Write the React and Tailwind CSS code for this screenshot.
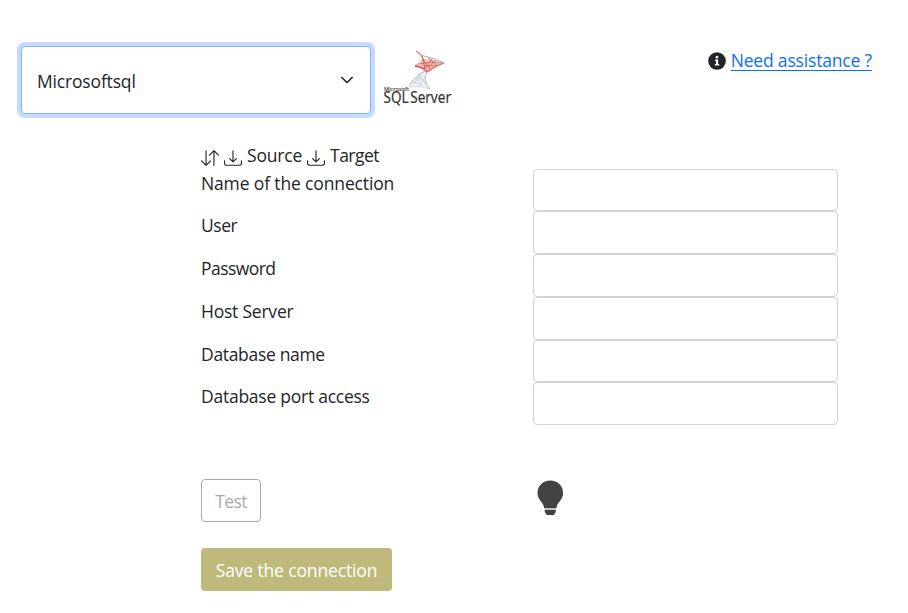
import React from "react";
import { BsArrowDownUp, BsDownload, BsChevronDown } from "react-icons/bs";

const fields = [
  { label: "Name of the connection", type: "text", height: "h-[42px]", tracking: "tracking-[-0.14px]" },
  { label: "User", type: "text", height: "h-[43px]", tracking: "tracking-[-0.45px]" },
  { label: "Password", type: "password", height: "h-[43px]", tracking: "tracking-[-0.55px]" },
  { label: "Host Server", type: "text", height: "h-[43px]", tracking: "tracking-[-0.22px]" },
  { label: "Database name", type: "text", height: "h-[42px]", tracking: "tracking-[-0.32px]" },
  { label: "Database port access", type: "text", height: "h-[43px]", tracking: "tracking-[-0.25px]" },
];

function SqlServerLogo() {
  return (
    <svg width="70" height="60" viewBox="0 0 70 60" className="shrink-0 overflow-visible" aria-label="Microsoft SQL Server">
      <defs>
        <linearGradient id="wing" x1="0" x2="1" y1="0" y2="0">
          <stop offset="0" stopColor="#dd4444" />
          <stop offset="0.6" stopColor="#df6a62" />
          <stop offset="1" stopColor="#b99a9a" />
        </linearGradient>
      </defs>
      <path d="M43 21Q33 25 26 37Q37 35 47 39Q39 32 43 21Z" fill="#eef1f4" />
      <path d="M42 21Q33 25 26 36M44 22Q39 31 47 39" fill="none" stroke="#a3afbd" strokeWidth="0.9" />
      <path d="M26 37Q37 35 47 39M30 32L38 35L34 27L41 30L35 36M36 25L42 33M38 24L31 34" fill="none" stroke="#c3cad2" strokeWidth="0.7" />
      <path d="M40 9Q39 13 32 16Q40 17 44 22Q50 17 61 13Q53 9 40 9Z" fill="#f5c9c5" />
      <path d="M33 1Q35 5 45 7Q54 9 61 13" fill="none" stroke="#b6a6a8" strokeWidth="1" />
      <path d="M33 1Q40 4 40 9Q38 13 32 16" fill="none" stroke="#ce7777" strokeWidth="0.9" />
      <path d="M32 16Q40 17 44 22Q50 17 61 13" fill="none" stroke="url(#wing)" strokeWidth="1.4" />
      <path d="M38 6L46 18L52 10M40 9L42 19L49 9M37 14L47 12L59 13M40 16L54 15L45 8" fill="none" stroke="url(#wing)" strokeWidth="0.9" />
      <text x="1" y="41" fontFamily="Open Sans, sans-serif" fontSize="5.6" textLength="25" lengthAdjust="spacingAndGlyphs" fill="#444" stroke="#444" strokeWidth="0.15">Microsoft</text>
      <text x="0.5" y="53.4" fontFamily="Noto Sans, sans-serif" fontSize="15.4" wordSpacing="-2.2" textLength="67.500" lengthAdjust="spacingAndGlyphs" fill="#333" stroke="#333" strokeWidth="0.2">SQL Server</text>
      <circle cx="68.600" cy="44.500" r="0.500" fill="#777" />
    </svg>
  );
}

function InfoIcon() {
  return (
    <svg width="18" height="18" viewBox="0 0 18 18" aria-hidden="true">
      <circle cx="9" cy="9" r="8.8" fill="#212529" />
      <circle cx="9" cy="5.2" r="1.35" fill="#fff" />
      <path d="M7 7.600H10.100V12H11.200V13.500H6.900V12H8V9.100H7Z" fill="#fff" />
    </svg>
  );
}

function Bulb() {
  return (
    <svg width="28" height="36" viewBox="0 0 28 36" aria-hidden="true">
      <path d="M14.300 .5C6.800 .5 1.500 6 1.500 13C1.500 20 7.500 22 8.200 28H20.400C21.100 22 27.100 20 27.100 13C27.100 6 21.800 .5 14.300 .5Z" fill="#434345" />
      <path d="M8.400 29H20.200" stroke="#b5b5b5" strokeWidth="1.6" />
      <path d="M8.800 30H19.800V32L17.800 35H10.800L8.800 32Z" fill="#434345" />
    </svg>
  );
}

export default function App() {
  return (
    <main className="h-[613px] w-[908px] overflow-hidden bg-white font-['Open_Sans','Noto_Sans',sans-serif] text-[17.5px] leading-[27px] text-[#212529]">
      <header className="flex h-[145px] items-start pl-[21px] pt-[46px]">
        <button className="flex h-[68px] w-[350px] items-center justify-between rounded-[4px] border border-[#86b7fe] bg-white pl-[15px] pr-[16px] ring-4 ring-[#c2dbfe]">
          <span className="pt-[3px] tracking-[-0.17px]">Microsoftsql</span>
          <BsChevronDown size={14} strokeWidth={1} />
        </button>
        <div className="ml-3 mt-[4px]">
          <SqlServerLogo />
        </div>
        <div className="ml-auto mr-[36px] mt-[1px] flex items-center">
          <InfoIcon />
          <a href="#" className="ml-[5px] whitespace-nowrap tracking-[-0.17px] text-[#0d6efd] underline decoration-1 underline-offset-[3px]">Need assistance ?</a>
        </div>
      </header>

      <form className="pl-[201px]">
        <div className="flex h-[24px] items-start">
          <BsArrowDownUp size={18} className="mt-[4px]" />
          <BsDownload size={18} className="ml-[5px] mt-[4px]" />
          <span className="-mt-[3px] ml-[5px] w-[55px] tracking-[-0.2px]">Source</span>
          <BsDownload size={18} className="ml-[5px] mt-[4px]" />
          <span className="-mt-[3px] ml-[5px] tracking-[-0.5px]">Target</span>
        </div>

        {fields.map((field) => (
          <label key={field.label} className={`flex items-start ${field.height}`}>
            <span className={`w-[332px] pt-[1px] ${field.tracking}`}>{field.label}</span>
            <input type={field.type} className="h-full w-[305px] rounded-[4px] border border-[#ced4da] bg-white px-3 outline-none" />
          </label>
        ))}

        <div className="mt-[54px] flex h-[43px] items-start">
          <button type="button" disabled className="h-[43px] w-[60px] rounded-[4px] border border-[#a6abb0] pt-[2px] tracking-[-0.6px] text-[#a6abb0]">Test</button>
          <div className="ml-[275px] mt-[1px]">
            <Bulb />
          </div>
        </div>
        <button type="button" className="mt-[26px] h-[43px] w-[191px] whitespace-nowrap rounded-[4px] bg-[#bfba7c] pt-[2px] tracking-[-0.14px] text-white">Save the connection</button>
      </form>
    </main>
  );
}
